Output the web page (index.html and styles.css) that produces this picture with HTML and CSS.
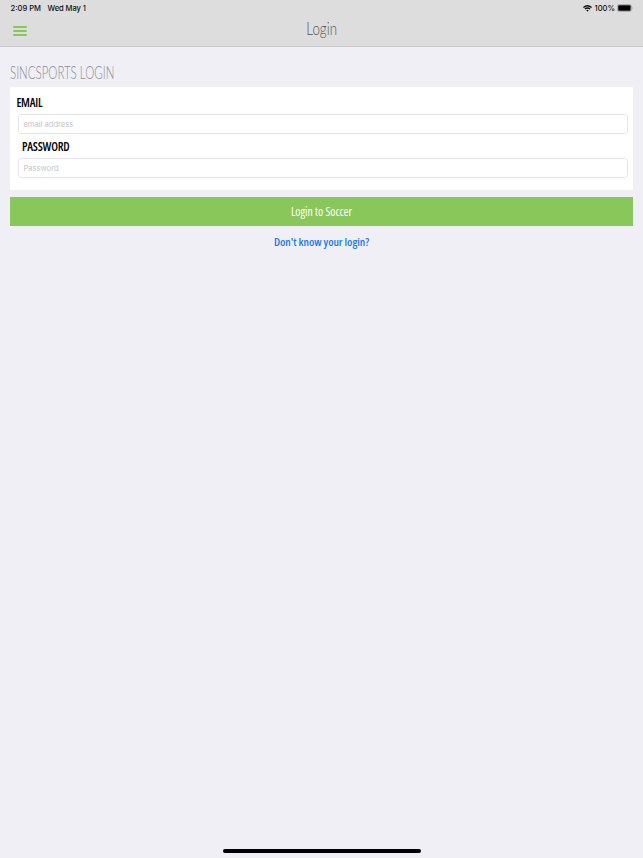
FILE: index.html
```html
<!DOCTYPE html>
<html lang="en">
<head>
<meta charset="utf-8">
<title>Login</title>
<link rel="stylesheet" href="styles.css">
</head>
<body>
<header class="top">
  <div class="status">
    <span class="time">2:09 PM</span><span class="date">Wed May 1</span>
    <svg class="wifi" width="9" height="7" viewBox="0 0 9 7" fill="none" stroke="#111" stroke-width="1.35"><path d="M.4 2.5Q4.5-1 8.6 2.5M1.9 4.1Q4.5 1.9 7.1 4.1"/><path d="M3.2 5.3Q4.5 4.2 5.8 5.3L4.5 6.7Z" fill="#111" stroke="none"/></svg>
    <span class="percent">100%</span>
    <svg class="battery" width="16" height="8" viewBox="0 0 16 8"><rect x=".4" y=".4" width="14" height="7.2" rx="2" fill="none" stroke="#999" stroke-width=".8"/><rect x="1.2" y="1.2" width="12.4" height="5.6" rx="1" fill="#000"/><path d="M15.1 2.8Q16.2 4 15.1 5.2Z" fill="#999"/></svg>
  </div>
  <nav class="bar">
    <svg class="menu" width="14" height="10" viewBox="0 0 14 10" stroke="#8ac75b" stroke-width="2" stroke-linecap="round"><path d="M1 1h12M1 5h12M1 9h12"/></svg>
    <h1 class="title">Login</h1>
  </nav>
</header>
<main class="content">
  <h2 class="heading">SINCSPORTS LOGIN</h2>
  <form class="card">
    <label class="label email" for="email">EMAIL</label>
    <input class="field" id="email" type="email" placeholder="email address">
    <label class="label password" for="password">PASSWORD</label>
    <input class="field" id="password" type="password" placeholder="Password">
  </form>
  <button class="submit"><span class="submit-text">Login to Soccer</span></button>
  <a class="help">Don't know your login?</a>
</main>
<div class="home"></div>
</body>
</html>
```
FILE: styles.css
```css
* { box-sizing: border-box; }
body {
  margin: 0;
  height: 858px;
  display: flex;
  flex-direction: column;
  background: #efeff5;
  font-family: Inter, "Liberation Sans", sans-serif;
  overflow: hidden;
}
.top { height: 47px; background: #ddd; border-bottom: 1px solid #cbcbcd; }
.status {
  height: 16px;
  display: flex;
  align-items: center;
  padding: 0 10px 0 10.5px;
  font-size: 7.6px;
  font-weight: 500;
  color: #111;
}
.date { margin-left: 6.5px; letter-spacing: -.08px; }
.wifi { margin-left: auto; }
.percent { margin: 0 2px 0 3px; }
.bar { height: 30px; display: grid; grid-template-columns: 40px 1fr 40px; align-items: center; }
.menu { margin-left: 13px; }
.title, .heading { margin: 0; font-family: Lato, sans-serif; font-weight: 300; white-space: nowrap; }
.title { justify-self: center; font-size: 18px; line-height: 24px; color: #555; transform: scaleX(.74); margin-top: -6px; }
.content { flex: 1; padding: 15px 10.4px 0; display: flex; flex-direction: column; align-items: stretch; }
.heading {
  align-self: flex-start;
  height: 25px;
  line-height: 21px;
  font-size: 17.8px;
  color: #8c8c92;
  transform: scaleX(.645);
  transform-origin: left;
}
.card { height: 103px; background: #fff; border-radius: 1px; padding: 8px 5px 0 8px; display: flex; flex-direction: column; align-items: flex-start; }
.label, .submit-text, .help {
  font-family: "Open Sans", sans-serif;
  font-stretch: 75%;
  font-size: 11.5px;
  font-weight: 600;
  white-space: nowrap;
}
.label { height: 14px; line-height: 14px; font-size: 11.9px; font-weight: 560; letter-spacing: -.18px; color: #000; }
.email { margin-left: -2px; }
.password { margin-left: 3.5px; margin-top: 5px; }
.field {
  width: 100%;
  height: 20px;
  margin: 5px 0 0;
  padding: 0 4px;
  border: 1px solid #e5e5e7;
  border-radius: 3.5px;
  font: 7.6px Inter, sans-serif;
}
.field::placeholder { color: #c5c5c9; opacity: 1; }
.submit { height: 29px; margin-top: 7px; padding: 0 0 1px; border: 0; background: #8ac75b; color: #fff; }
.submit-text { display: inline-block; font-size: 11.8px; font-weight: 400; }
.help { align-self: center; margin-top: 8px; line-height: 16px; font-weight: 570; letter-spacing: -.05px; color: #1b7bea; }
.home { width: 198px; height: 4px; margin: 0 auto 5px; border-radius: 2px; background: #000; }
```
